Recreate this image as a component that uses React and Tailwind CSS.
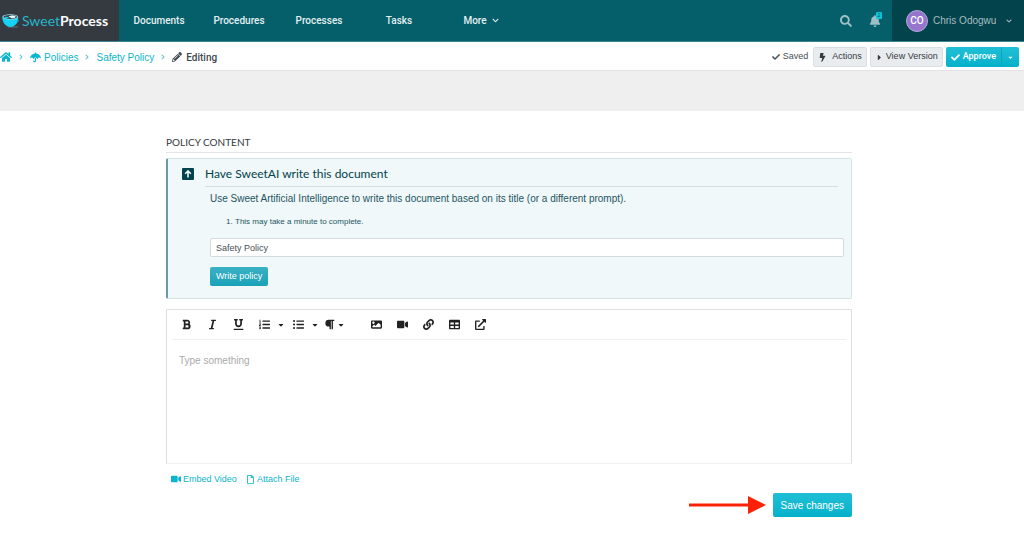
import { useState } from 'react';
import {
  FaBell,
  FaBold,
  FaBolt,
  FaCaretDown,
  FaCaretRight,
  FaCheck,
  FaChevronDown,
  FaChevronRight,
  FaExternalLinkAlt,
  FaHome,
  FaImage,
  FaItalic,
  FaLink,
  FaListOl,
  FaListUl,
  FaParagraph,
  FaPencilAlt,
  FaRegFile,
  FaSearch,
  FaTable,
  FaUmbrella,
  FaUnderline,
  FaVideo,
} from 'react-icons/fa';

const navItems = ['Documents', 'Procedures', 'Processes', 'Tasks'];

const tools = [
  { label: 'Bold', icon: FaBold, width: 'w-[26px]' },
  { label: 'Italic', icon: FaItalic, width: 'w-[26px]' },
  { label: 'Underline', icon: FaUnderline, width: 'w-[26px]' },
  { label: 'Ordered list', icon: FaListOl, width: 'w-[26px]', menu: 'w-2' },
  { label: 'Unordered list', icon: FaListUl, width: 'w-[26px]', menu: 'w-2' },
  { label: 'Paragraph format', icon: FaParagraph, width: 'w-5', menu: 'w-1' },
  { label: 'Insert image', icon: FaImage, width: 'w-[26px]', gap: 'ml-5' },
  { label: 'Insert video', icon: FaVideo, width: 'w-[26px]' },
  { label: 'Insert link', icon: FaLink, width: 'w-[26px]' },
  { label: 'Insert table', icon: FaTable, width: 'w-[26px]' },
  { label: 'Open in window', icon: FaExternalLinkAlt, width: 'w-[26px]' },
];

const CupLogo = () => (
  <svg viewBox="0 0 18 14" className="h-[14px] w-[18px]" aria-hidden="true">
    <path d="M8 12.400h8.500l-1.500 1H5z" fill="#6d7378" />
    <path d="M14.800 5.500c2.600-.4 2.400 2.700-2.300 4.500" fill="none" stroke="#1fa9c0" strokeWidth="1" />
    <path d="M.3 3.200C.3 8.600 4 13 8.400 13s7.800-4.400 7.800-9.800z" fill="#12d3f5" />
    <ellipse cx="8.200" cy="3" rx="7.900" ry="2.700" fill="#8fdbe8" />
    <ellipse cx="8.200" cy="2.900" rx="6.800" ry="2" fill="#31393f" />
    <path d="M6.500 2.400c2.500-1.400 5.500-1 7.500.3-1.200 1.700-4.600 2.300-7.500-.3z" fill="#e9f7fa" />
    <path d="M2.200 3.200c1.500-.8 3.800-.4 5 .9-2 .5-4 .2-5-.9z" fill="#12d3f5" />
  </svg>
);

const Separator = () => <FaChevronRight className="size-[6px] text-[#68bfca]" />;

const GreyButton = ({ children, className }) => (
  <button
    className={`flex h-5 items-center rounded-xs border border-[#dadfe3] bg-[#e9ecef] px-1 text-[#343a40] ${className}`}
  >
    {children}
  </button>
);

const Header = () => (
  <header className="flex h-[42px] border-b border-[#3b858f] bg-[#045f6b] text-[#e3eff0]">
    <a href="#" className="flex w-[119px] items-center gap-[2px] bg-[#343a40] pl-[2px]">
      <CupLogo />
      <span className="font-[Lato,sans-serif] text-[14px] text-[#27b5cb]">
        Sweet<span className="font-bold text-white">Process</span>
      </span>
    </a>
    <nav className="flex font-[Roboto,sans-serif] text-[10px] font-medium">
      {navItems.map((item) => (
        <a key={item} href="#" className="flex w-20 items-center justify-center">
          {item}
        </a>
      ))}
      <button className="flex w-[84px] items-center justify-center gap-[5px]">
        More <FaChevronDown className="size-[7px]" />
      </button>
    </nav>
    <div className="ml-auto flex items-center gap-[17px] pr-[11px] text-[#9bbfc4]">
      <button aria-label="Search">
        <FaSearch className="size-3" />
      </button>
      <button aria-label="Notifications" className="relative">
        <FaBell className="size-3" />
        <span className="absolute -top-[3px] left-[7px] h-[7px] w-[6px] rounded-[1px] bg-[#0bc5dc] text-center text-[6px] leading-[7px] text-[#045f6b]">
          2
        </span>
      </button>
    </div>
    <button className="flex w-[132px] items-center bg-[#03434c] pl-[14px] text-[10px] text-[#a3bcc0]">
      <span className="flex size-[22px] items-center justify-center rounded-full border border-[#b5a9d6] bg-[#9575cd] font-[Roboto,sans-serif] font-medium text-white">
        CO
      </span>
      <span className="ml-[5px] whitespace-nowrap">Chris Odogwu</span>
      <FaChevronDown className="mr-3 ml-auto size-[6px]" />
    </button>
  </header>
);

const Toolbar = () => (
  <div className="flex h-5 items-center bg-white pr-[5px]">
    <nav aria-label="Breadcrumb" className="flex items-center gap-[6px] text-[10px] text-[#0bb5cc]">
      <a href="#" aria-label="Home">
        <FaHome className="size-3" />
      </a>
      <Separator />
      <a href="#" className="flex items-center gap-[3px]">
        <FaUmbrella className="size-[11px]" /> Policies
      </a>
      <Separator />
      <a href="#">Safety Policy</a>
      <Separator />
      <span className="flex items-center gap-1 font-[Roboto,sans-serif] font-medium text-[#40474e]">
        <FaPencilAlt className="size-[10px]" /> Editing
      </span>
    </nav>
    <div className="ml-auto flex items-center gap-[3px] text-[9px]">
      <span className="mr-[2px] flex items-center gap-[3px] text-[#495057]">
        <FaCheck className="size-2" /> Saved
      </span>
      <GreyButton className="gap-[5px]">
        <FaBolt className="size-[9px]" /> Actions
      </GreyButton>
      <GreyButton className="gap-[2px]">
        <FaCaretRight className="size-[9px]" /> View Version
      </GreyButton>
      <div className="flex h-5 rounded-xs bg-linear-to-b from-[#1fc0d6] to-[#04b0cb] font-[Roboto,sans-serif] font-medium text-white">
        <button className="flex items-center gap-[3px] px-[5px]">
          <FaCheck className="size-[9px]" /> Approve
        </button>
        <button
          aria-label="More approve options"
          className="flex w-[18px] items-center justify-center border-l border-[#08a5bc]"
        >
          <FaCaretDown className="size-[7px]" />
        </button>
      </div>
    </div>
  </div>
);

const WritePanel = () => {
  const [prompt, setPrompt] = useState('Safety Policy');

  return (
    <section className="mt-[5px] rounded-xs border border-l-2 border-[#d3e4e7] border-l-[#6a9ba4] bg-[#f0f8fa] pt-[7px] pr-[7px] pb-3 pl-[14px] text-[#1f5560]">
      <div className="flex gap-[11px] pr-[6px]">
        <svg viewBox="0 0 12 12" className="mt-[2px] size-3 shrink-0" aria-hidden="true">
          <rect width="12" height="12" rx="1" fill="#03434c" />
          <path d="M6 9.500V3.200M3.200 5.800L6 3l2.800 2.800" fill="none" stroke="#f0f8fa" strokeWidth="1.600" />
        </svg>
        <h2 className="flex-1 border-b border-[#d3dfe2] pb-1 font-[Lato,sans-serif] text-[12px] leading-4 text-[#03434c]">
          Have SweetAI write this document
        </h2>
      </div>
      <div className="pl-7">
        <p className="mt-1 text-[10px] leading-4">
          Use Sweet Artificial Intelligence to write this document based on its title (or a different prompt).
        </p>
        <ol className="mt-[9px] list-decimal pl-[25px] text-[8px] leading-3">
          <li>This may take a minute to complete.</li>
        </ol>
        <input
          aria-label="Prompt"
          value={prompt}
          onChange={(e) => setPrompt(e.target.value)}
          className="mt-[10px] block h-[19px] w-full rounded-xs border border-[#d5dadd] bg-white px-[5px] text-[9px] text-[#495057]"
        />
        <button className="mt-[10px] flex h-[19px] items-center rounded-xs bg-linear-to-b from-[#3ab0c3] to-[#17a2b8] px-[6px] text-[9px] text-white">
          Write policy
        </button>
      </div>
    </section>
  );
};

const Editor = () => (
  <section className="mt-[10px] rounded-t-xs border border-[#dedede] border-b-[#efefef] px-[5px]">
    <div className="flex h-[30px] items-center border-b border-[#efefef] pl-px text-[#222]">
      {tools.map(({ label, icon: Icon, width, menu, gap = '' }) => (
        <div key={label} className={`flex items-center ${gap}`}>
          <button aria-label={label} className={`flex justify-center ${width}`}>
            <Icon className="size-[11px]" />
          </button>
          {menu && (
            <button aria-label={`${label} options`} className={`flex justify-center ${menu}`}>
              <FaCaretDown className="size-2 shrink-0" />
            </button>
          )}
        </div>
      ))}
    </div>
    <textarea
      aria-label="Policy content"
      placeholder="Type something"
      className="block h-[123px] w-full resize-none px-[7px] pt-[13px] text-[10px] leading-4 outline-none placeholder:text-[#aaa]"
    />
  </section>
);

export default function App() {
  return (
    <div className="min-h-screen bg-white font-['Liberation_Sans',sans-serif]">
      <Header />
      <div className="border-b border-[#e3e3e3] pt-[5px] pb-[3px]">
        <Toolbar />
      </div>
      <div className="h-10 bg-[#efefef]" />
      <main className="pt-[23px] pr-[172px] pl-[166px]">
        <h1 className="border-b border-[#e5e5e5] pb-[2px] font-[Lato,sans-serif] text-[10px] leading-4 text-[#343a40]">
          POLICY CONTENT
        </h1>
        <WritePanel />
        <Editor />
        <div className="mt-[9px] flex gap-[9px] pl-[5px] text-[9px] leading-3 text-[#0bb5cc]">
          <a href="#" className="flex items-center gap-[2px]">
            <FaVideo className="size-[10px]" /> Embed Video
          </a>
          <a href="#" className="flex items-center gap-[2px]">
            <FaRegFile className="size-[9px]" /> Attach File
          </a>
        </div>
        <div className="mt-2 flex items-center justify-end gap-[7px]">
          <svg viewBox="0 0 77 18" className="h-[18px] w-[77px]" aria-hidden="true">
            <path d="M0 7.500h59V0l18 9-18 9v-7.500H0z" fill="#fb2208" />
          </svg>
          <button className="h-6 rounded-xs bg-linear-to-b from-[#1fc0d6] to-[#04b0cb] px-2 text-[10px] text-white">
            Save changes
          </button>
        </div>
      </main>
    </div>
  );
}
